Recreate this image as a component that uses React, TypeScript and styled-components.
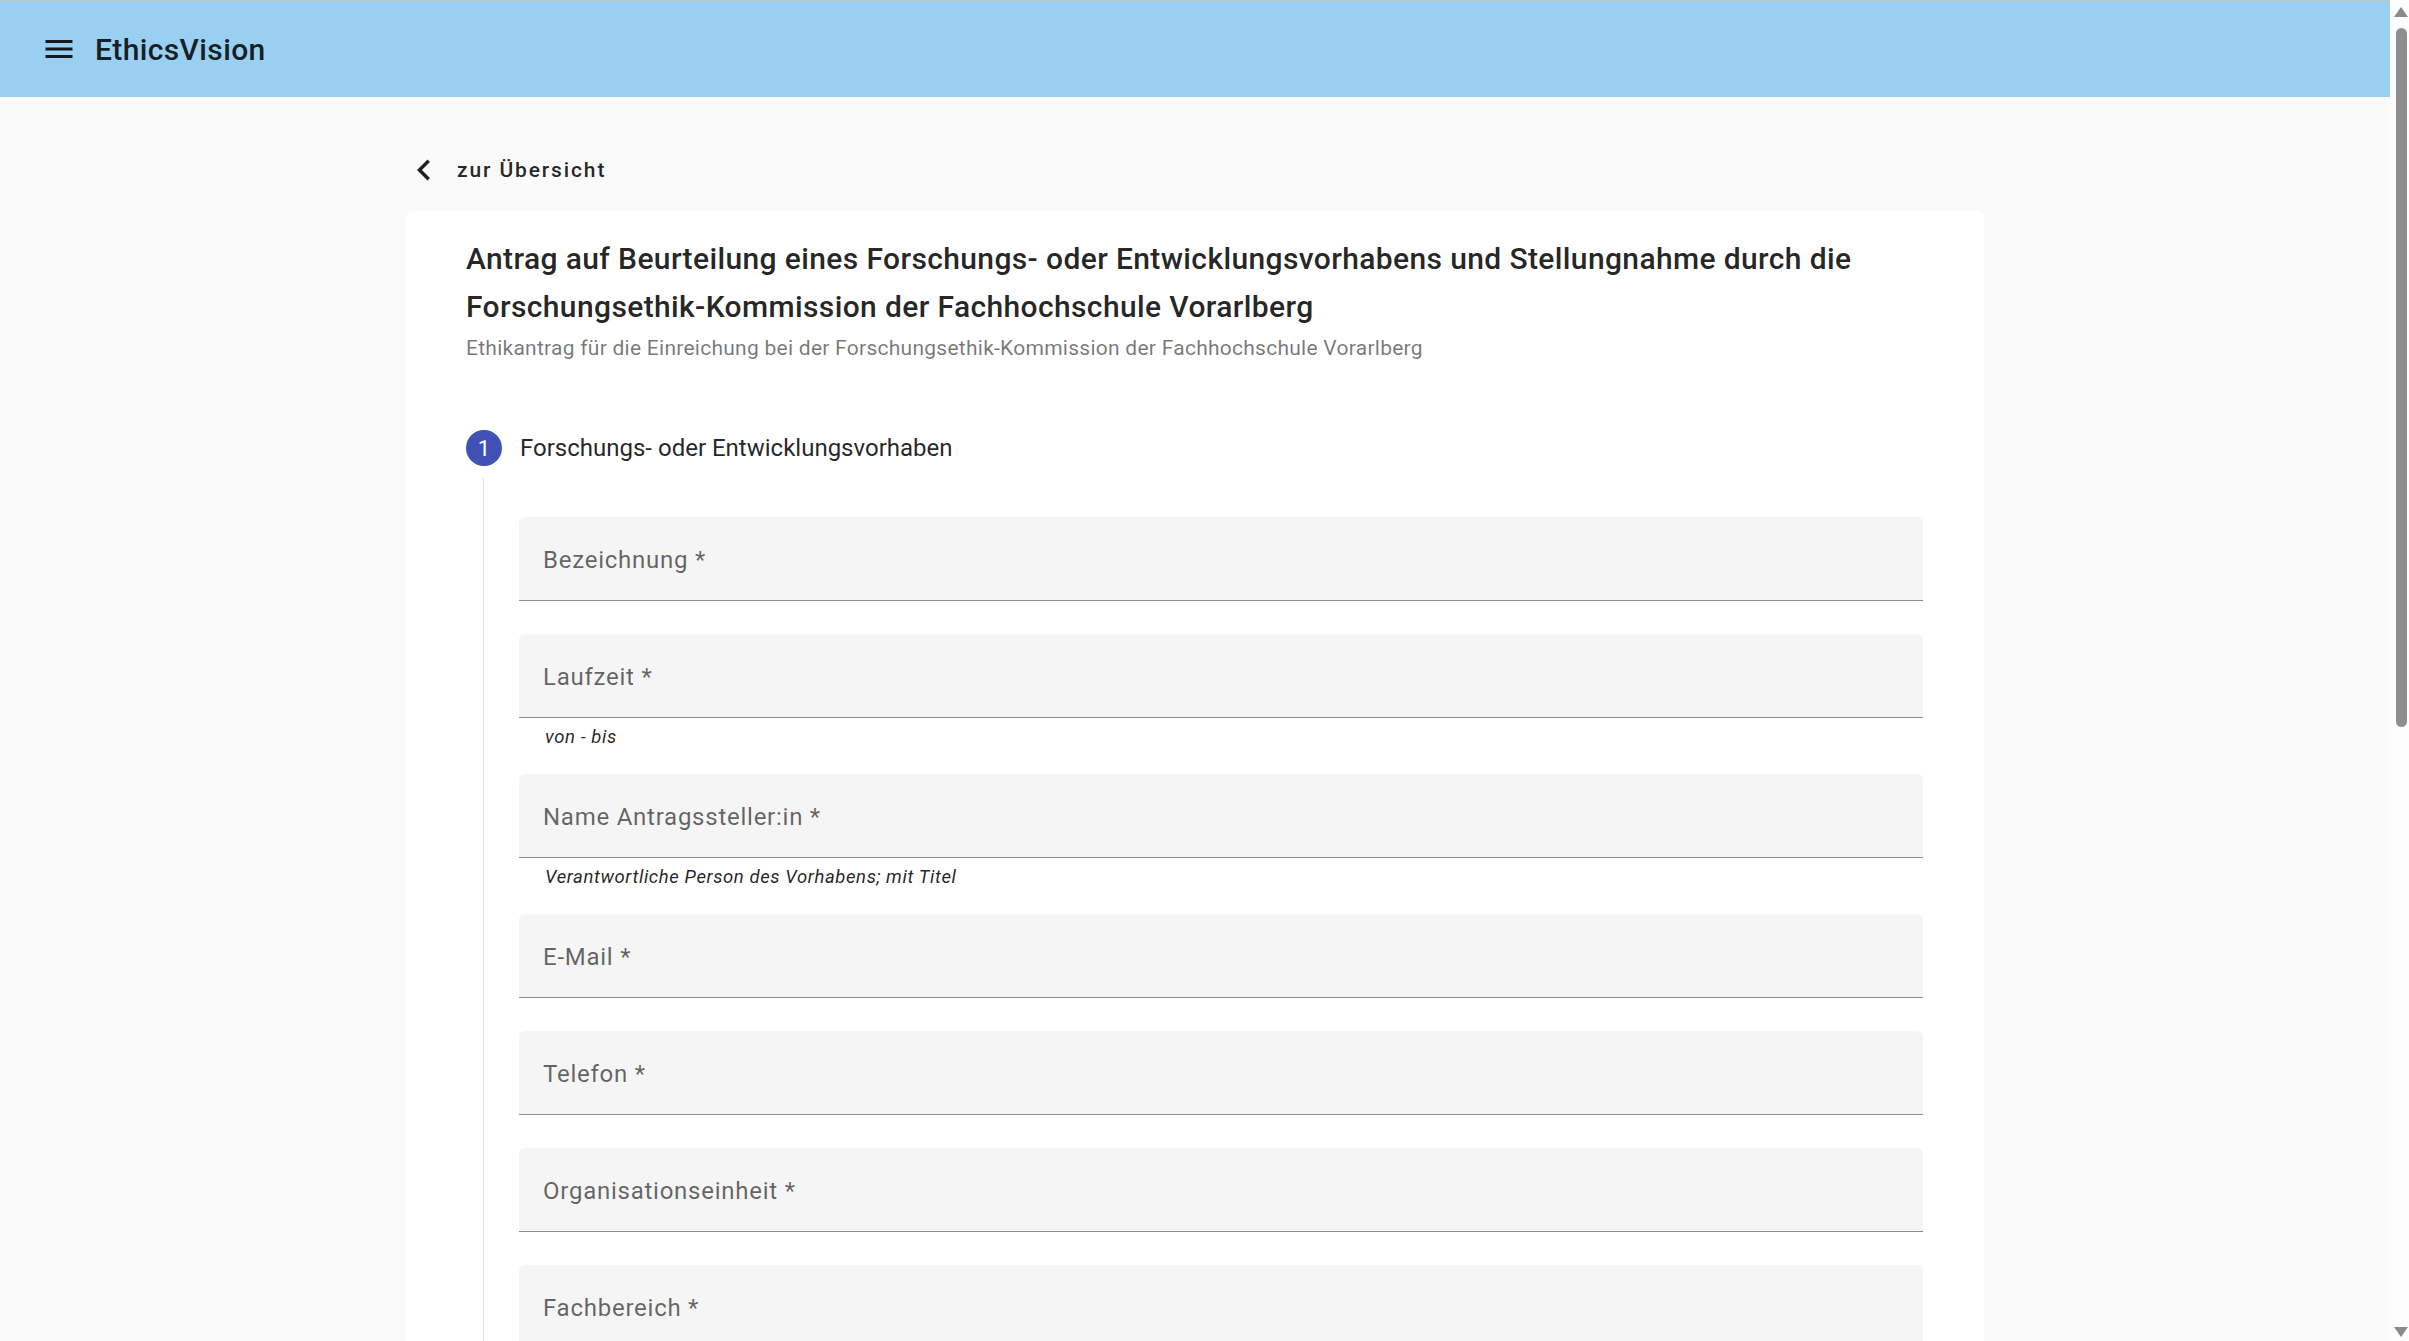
import React from "react";
import styled, { createGlobalStyle } from "styled-components";

const GlobalStyle = createGlobalStyle`
  html, body {
    margin: 0;
    padding: 0;
    height: 100%;
    overflow: hidden;
  }
  body {
    font-family: Roboto, "Noto Sans", "Liberation Sans", sans-serif;
    background: #fafafa;
  }
  * { box-sizing: border-box; }
`;

const Viewport = styled.div`
  display: flex;
  width: 100vw;
  height: 100vh;
  overflow: hidden;
`;

const PageColumn = styled.div`
  flex: 1;
  min-width: 0;
  display: flex;
  flex-direction: column;
  background: #fafafa;
  border-top: 1px solid #c4c4c4;
  overflow: hidden;
`;

const TopBar = styled.header`
  flex: none;
  height: 96px;
  background: #99cff0;
  display: flex;
  align-items: center;
  padding-left: 23px;
`;

const MenuButton = styled.button`
  width: 72px;
  height: 72px;
  border: none;
  background: transparent;
  padding: 0;
  display: flex;
  align-items: center;
  justify-content: center;
  color: rgba(0, 0, 0, 0.87);
  cursor: pointer;
`;

const AppTitle = styled.span`
  font-family: Roboto, sans-serif;
  font-weight: 500;
  font-size: 30px;
  letter-spacing: 0.375px;
  color: rgba(0, 0, 0, 0.87);
`;

const Main = styled.main`
  display: flex;
  flex-direction: column;
  align-items: center;
  padding-top: 52px;
`;

const Column = styled.div`
  width: 1578px;
  display: flex;
  flex-direction: column;
`;

const BackRow = styled.a`
  display: flex;
  align-items: center;
  align-self: flex-start;
  height: 42px;
  gap: 12px;
  margin-left: -3px;
  margin-bottom: 20px;
  color: rgba(0, 0, 0, 0.87);
  text-decoration: none;
  cursor: pointer;
`;

const BackLabel = styled.span`
  font-family: Roboto, sans-serif;
  font-weight: 500;
  font-size: 21px;
  line-height: 42px;
  letter-spacing: 1.875px;
`;

const Card = styled.section`
  background: #ffffff;
  border-radius: 6px;
  padding: 24px 61px 0 60px;
  display: flex;
  flex-direction: column;
`;

const CardTitle = styled.h1`
  margin: 0;
  font-family: Roboto, sans-serif;
  font-weight: 500;
  font-size: 30px;
  line-height: 48px;
  letter-spacing: 0.375px;
  color: rgba(0, 0, 0, 0.87);
`;

const CardSubtitle = styled.p`
  margin: 2px 0 0;
  font-family: Roboto, sans-serif;
  font-weight: 400;
  font-size: 21px;
  line-height: 30px;
  letter-spacing: 0.26px;
  color: rgba(0, 0, 0, 0.54);
`;

const Step = styled.div`
  margin-top: 67px;
  display: flex;
  flex-direction: column;
`;

const StepHeader = styled.div`
  display: flex;
  align-items: center;
  gap: 18px;
  height: 36px;
`;

const StepIcon = styled.span`
  width: 36px;
  height: 36px;
  border-radius: 50%;
  background: #3f51b5;
  color: #ffffff;
  display: flex;
  align-items: center;
  justify-content: center;
  font-family: Roboto, sans-serif;
  font-size: 22px;
  font-weight: 400;
`;

const StepLabel = styled.span`
  font-family: Roboto, sans-serif;
  font-size: 24px;
  font-weight: 400;
  color: rgba(0, 0, 0, 0.87);
`;

const StepContent = styled.div`
  margin-top: 12px;
  margin-left: 17px;
  border-left: 1px solid #e0e0e0;
  padding: 39px 0 200px 35px;
  display: flex;
  flex-direction: column;
`;

const FieldGroup = styled.div<{ $hasHint?: boolean }>`
  display: flex;
  flex-direction: column;
  margin-bottom: ${(p) => (p.$hasHint ? "28px" : "33px")};
`;

const FieldBox = styled.div`
  height: 84px;
  background: #f5f5f5;
  border-radius: 6px 6px 0 0;
  border-bottom: 1px solid rgba(0, 0, 0, 0.42);
  display: flex;
  align-items: center;
  padding: 3px 24px 0;
`;

const FieldLabel = styled.label`
  font-family: Roboto, sans-serif;
  font-size: 24px;
  font-weight: 400;
  line-height: 36px;
  letter-spacing: 0.75px;
  color: rgba(0, 0, 0, 0.6);
`;

const Hint = styled.div`
  padding: 10px 24px 0 26px;
  font-family: Roboto, sans-serif;
  font-style: italic;
  font-size: 18.5px;
  line-height: 18px;
  letter-spacing: 0.6px;
  color: rgba(0, 0, 0, 0.87);
`;

const ScrollTrack = styled.div`
  flex: none;
  width: 19px;
  height: 100%;
  background: #fcfcfc;
  display: flex;
  flex-direction: column;
`;

const ArrowUp = styled.svg`
  display: block;
  margin: 7px 0 0 4px;
`;

const ArrowDown = styled.svg`
  display: block;
  margin: auto 0 4px 4px;
`;

const Thumb = styled.div`
  margin: 11px 0 0 6px;
  width: 11px;
  height: 699px;
  border-radius: 6px;
  background: #8e8e8e;
`;

const MenuIcon = () => (
  <svg width="36" height="36" viewBox="0 0 24 24" fill="currentColor" aria-hidden="true">
    <path d="M3 18h18v-2H3v2zm0-5h18v-2H3v2zm0-7v2h18V6H3z" />
  </svg>
);

const ChevronLeft = () => (
  <svg width="42" height="42" viewBox="0 0 24 24" fill="currentColor" aria-hidden="true">
    <path d="M15.41 7.41L14 6l-6 6 6 6 1.41-1.41L10.83 12z" />
  </svg>
);

type Field = { label: string; hint?: string };

const fields: Field[] = [
  { label: "Bezeichnung *" },
  { label: "Laufzeit *", hint: "von - bis" },
  { label: "Name Antragssteller:in *", hint: "Verantwortliche Person des Vorhabens; mit Titel" },
  { label: "E-Mail *" },
  { label: "Telefon *" },
  { label: "Organisationseinheit *" },
  { label: "Fachbereich *" },
];

export default function App() {
  return (
    <>
      <GlobalStyle />
      <Viewport>
        <PageColumn>
          <TopBar>
            <MenuButton aria-label="Menü">
              <MenuIcon />
            </MenuButton>
            <AppTitle>EthicsVision</AppTitle>
          </TopBar>
          <Main>
            <Column>
              <BackRow>
                <ChevronLeft />
                <BackLabel>zur Übersicht</BackLabel>
              </BackRow>
              <Card>
                <CardTitle>
                  Antrag auf Beurteilung eines Forschungs- oder Entwicklungsvorhabens und Stellungnahme durch die
                  Forschungsethik-Kommission der Fachhochschule Vorarlberg
                </CardTitle>
                <CardSubtitle>
                  Ethikantrag für die Einreichung bei der Forschungsethik-Kommission der Fachhochschule Vorarlberg
                </CardSubtitle>
                <Step>
                  <StepHeader>
                    <StepIcon>1</StepIcon>
                    <StepLabel>Forschungs- oder Entwicklungsvorhaben</StepLabel>
                  </StepHeader>
                  <StepContent>
                    {fields.map((f) => (
                      <FieldGroup key={f.label} $hasHint={!!f.hint}>
                        <FieldBox>
                          <FieldLabel>{f.label}</FieldLabel>
                        </FieldBox>
                        {f.hint && <Hint>{f.hint}</Hint>}
                      </FieldGroup>
                    ))}
                  </StepContent>
                </Step>
              </Card>
            </Column>
          </Main>
        </PageColumn>
        <ScrollTrack>
          <ArrowUp width="14" height="10" viewBox="0 0 14 10">
            <path d="M7 0 L14 10 L0 10 Z" fill="#8a8a8a" />
          </ArrowUp>
          <Thumb />
          <ArrowDown width="14" height="10" viewBox="0 0 14 10">
            <path d="M0 0 L14 0 L7 10 Z" fill="#8a8a8a" />
          </ArrowDown>
        </ScrollTrack>
      </Viewport>
    </>
  );
}
